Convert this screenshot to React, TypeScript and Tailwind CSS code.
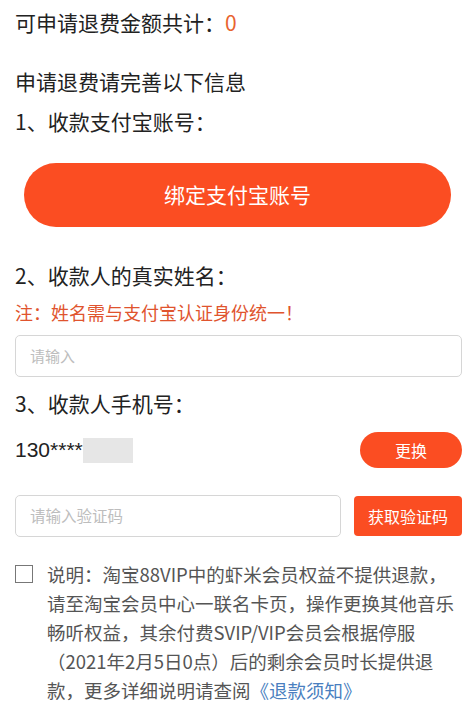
import React from 'react';

const font = "font-['Noto_Sans_CJK_SC','Noto_Sans',sans-serif]";

const App: React.FC = () => {
  return (
    <div className={`w-[473px] h-[704px] bg-white overflow-hidden pl-[15px] pr-[11px] pt-2 text-[#222] ${font}`}>
      <div className="text-[21px] leading-[28px]">
        可申请退费金额共计：<span className="text-[#e8632f]">0</span>
      </div>

      <div className="mt-[31px] text-[21px] leading-[28px]">申请退费请完善以下信息</div>
      <div className="mt-3 text-[21px] leading-[28px]">1、收款支付宝账号：</div>

      <button className="mt-7 ml-[9px] mr-[10px] w-[427px] h-16 rounded-full bg-[#fb4d22] text-white text-[21px] flex items-center justify-center">
        绑定支付宝账号
      </button>

      <div className="mt-[34px] text-[21px] leading-[28px]">2、收款人的真实姓名：</div>
      <div className="mt-[11px] text-[18px] leading-6 text-[#e0542e]">注：姓名需与支付宝认证身份统一！</div>

      <div className="mt-[11px] h-[42px] w-[447px] rounded-[5px] border border-[#d6d6d6] flex items-center px-[14px]">
        <span className="text-[15px] text-[#bdbdbd]">请输入</span>
      </div>

      <div className="mt-3 text-[21px] leading-[28px]">3、收款人手机号：</div>

      <div className="mt-[15px] h-9 flex items-center justify-between">
        <div className="flex items-center">
          <span className="text-[21px] leading-[28px] font-['Liberation_Sans',Arial,sans-serif]">130****</span>
          <span className="w-[50px] h-[25px] bg-[#e6e6e6]" />
        </div>
        <button className="w-[102px] h-9 rounded-full bg-[#fb4d22] text-white text-[16px] flex items-center justify-center">
          更换
        </button>
      </div>

      <div className="mt-[27px] flex items-center justify-between">
        <div className="h-[42px] w-[326px] rounded-[5px] border border-[#d6d6d6] flex items-center px-[14px]">
          <span className="text-[15.5px] text-[#bdbdbd]">请输入验证码</span>
        </div>
        <button className="w-[108px] h-10 rounded-[4px] bg-[#fb4d22] text-white text-[16px] flex items-center justify-center">
          获取验证码
        </button>
      </div>

      <div className="mt-[23px] flex items-start">
        <div className="mt-[5px] w-[18px] h-[18px] border-[1.5px] border-[#777] shrink-0" />
        <p className="ml-[14px] text-[18.5px] leading-[29px] text-[#555] whitespace-nowrap">
          说明：淘宝88VIP中的虾米会员权益不提供退款，<br />
          请至淘宝会员中心一联名卡页，操作更换其他音乐<br />
          畅听权益，其余付费SVIP/VIP会员会根据停服<br />
          （2021年2月5日0点）后的剩余会员时长提供退<br />
          款，更多详细说明请查阅<span className="text-[#4a7fc0]">《退款须知》</span>
        </p>
      </div>
    </div>
  );
};

export default App;
